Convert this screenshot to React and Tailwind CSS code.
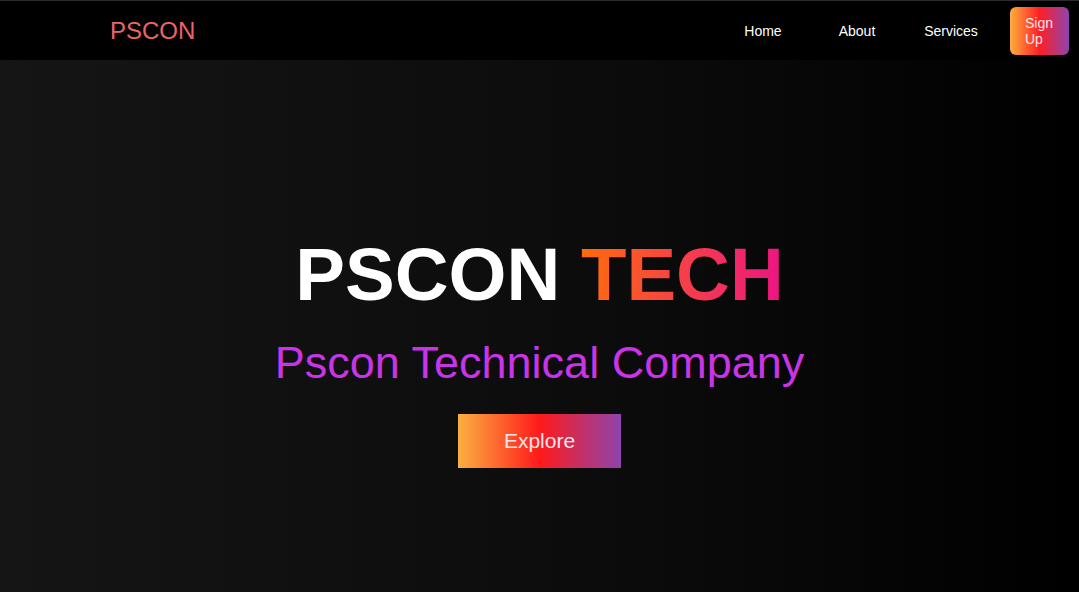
const links = ['Home', 'About', 'Services'];

const Navbar = () => (
  <nav className="h-[60px] bg-black border-t border-[#2c2c2c] flex items-center pl-[110px] pr-[10px]">
    <a href="#" className="text-[24px] text-[#ec6467] leading-none">PSCON</a>
    <ul className="ml-auto flex items-center">
      {links.map((l) => (
        <li key={l} className="w-[94px] text-center">
          <a href="#" className="text-[14px] text-white">{l}</a>
        </li>
      ))}
      <li className="ml-[12px]">
        <button className="w-[59px] h-[48px] rounded-md pl-[15px] text-left text-[14px] leading-[16px] text-[#fde7ea] bg-[linear-gradient(90deg,#fbae3c_0%,#ff1e26_50%,#8e44ad_100%)]">
          Sign Up
        </button>
      </li>
    </ul>
  </nav>
);

const Hero = () => (
  <section className="flex-1 flex flex-col items-center pt-[178px] bg-[linear-gradient(90deg,#151515_0%,#0b0b0b_60%,#000000_100%)]">
    <h1 className="text-[74.5px] font-bold leading-none text-white">
      PSCON{' '}
      <span className="bg-[linear-gradient(90deg,#ff6c0c,#ec1484)] bg-clip-text text-transparent">TECH</span>
    </h1>
    <p className="mt-[27px] text-[45px] leading-none text-[#c934e8]">Pscon Technical Company</p>
    <button className="mt-[29px] w-[163px] h-[54px] text-[21px] text-[#fde6ee] bg-[linear-gradient(90deg,#fbb040_0%,#ff1a1a_50%,#8e44ad_100%)]">
      Explore
    </button>
  </section>
);

const App = () => (
  <div className="h-[592px] flex flex-col overflow-hidden font-['Liberation_Sans',Arial,sans-serif]">
    <Navbar />
    <Hero />
  </div>
);

export default App;
